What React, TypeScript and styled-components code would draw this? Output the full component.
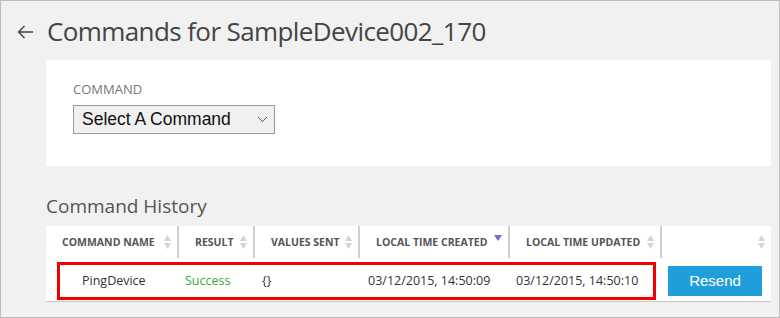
import React from "react";
import styled, { createGlobalStyle } from "styled-components";

const GlobalStyle = createGlobalStyle`
  html, body { margin: 0; padding: 0; }
  body {
    width: 780px;
    height: 318px;
    overflow: hidden;
    font-family: "Open Sans", "Noto Sans", sans-serif;
    background: #f1f1f1;
  }
  * { box-sizing: border-box; }
`;

interface Column {
  key: string;
  label: string;
  width: number;
  sorted?: boolean;
}

const columns: Column[] = [
  { key: "name", label: "Command Name", width: 131 },
  { key: "result", label: "Result", width: 76 },
  { key: "values", label: "Values Sent", width: 105 },
  { key: "created", label: "Local Time Created", width: 150, sorted: true },
  { key: "updated", label: "Local Time Updated", width: 152 },
  { key: "action", label: "", width: 111 },
];

const history = [
  {
    id: "1",
    name: "PingDevice",
    result: "Success",
    values: "{}",
    created: "03/12/2015, 14:50:09",
    updated: "03/12/2015, 14:50:10",
  },
];

function SortIcon({ active }: { active?: boolean }) {
  if (active) {
    return (
      <svg width="8" height="6" viewBox="0 0 8 6">
        <path d="M0 0 L8 0 L4 6 Z" fill="#6b6fd8" />
      </svg>
    );
  }
  return (
    <svg width="7" height="14" viewBox="0 0 7 14">
      <path d="M3.5 0 L7 6 L0 6 Z" fill="#d4d4d4" />
      <path d="M0 8 L7 8 L3.5 14 Z" fill="#d4d4d4" />
    </svg>
  );
}

function App() {
  return (
    <>
      <GlobalStyle />
      <Frame>
        <Header>
          <BackButton>
            <svg width="17" height="14" viewBox="0 0 17 14">
              <path
                d="M16 7 H1.5 M7.5 1 L1.5 7 L7.5 13"
                fill="none"
                stroke="#444"
                strokeWidth="1.4"
              />
            </svg>
          </BackButton>
          <Title>Commands for SampleDevice002_170</Title>
        </Header>

        <Card>
          <FieldLabel>Command</FieldLabel>
          <SelectBox>
            <span>Select A Command</span>
            <svg width="11" height="7" viewBox="0 0 11 7">
              <path d="M1 1 L5.5 5.5 L10 1" fill="none" stroke="#555" strokeWidth="1" />
            </svg>
          </SelectBox>
        </Card>

        <SectionTitle>Command History</SectionTitle>

        <Table>
          <HeadRow>
            {columns.map((c) => (
              <HeadCell key={c.key} $width={c.width}>
                <span>{c.label}</span>
                <SortSlot>
                  <SortIcon active={c.sorted} />
                </SortSlot>
              </HeadCell>
            ))}
          </HeadRow>
          {history.map((h) => (
            <BodyRow key={h.id}>
              <BodyCell $width={131} $pad={36}>{h.name}</BodyCell>
              <BodyCell $width={76} $pad={8} $color="#3aa935">{h.result}</BodyCell>
              <BodyCell $width={105} $pad={9}>{h.values}</BodyCell>
              <BodyCell $width={150} $pad={10}>{h.created}</BodyCell>
              <BodyCell $width={152} $pad={8}>{h.updated}</BodyCell>
              <BodyCell $width={111} $pad={8}>
                <ResendButton>Resend</ResendButton>
              </BodyCell>
              <Highlight />
            </BodyRow>
          ))}
        </Table>
      </Frame>
    </>
  );
}

export default App;

const Frame = styled.div`
  width: 780px;
  height: 318px;
  border: 1px solid #bdbdbd;
  padding: 0 8px 0 45px;
  background: #f1f1f1;
`;

const Header = styled.div`
  display: flex;
  align-items: center;
  height: 59px;
  margin-left: -45px;
  padding-left: 16px;
`;

const BackButton = styled.div`
  width: 30px;
  display: flex;
  align-items: center;
  margin-top: 2px;
`;

const Title = styled.h1`
  margin: 0;
  font-weight: 400;
  font-size: 26px;
  color: #444;
  letter-spacing: -0.6px;
`;

const Card = styled.div`
  background: #fff;
  height: 106px;
  padding: 20px 27px;
`;

const FieldLabel = styled.div`
  font-size: 13px;
  color: #777;
  text-transform: uppercase;
  line-height: 18px;
  margin-bottom: 7px;
`;

const SelectBox = styled.div`
  width: 202px;
  height: 29px;
  border: 1px solid #9a9a9a;
  background: #f0f0f0;
  display: flex;
  align-items: center;
  justify-content: space-between;
  padding: 0 6px 0 8px;
  font-family: "Liberation Sans", Arial, sans-serif;
  font-size: 17.5px;
  color: #111;
`;

const SectionTitle = styled.h2`
  margin: 0;
  height: 60px;
  display: flex;
  align-items: flex-end;
  padding-bottom: 7px;
  font-weight: 400;
  font-size: 19px;
  color: #555;
`;

const Table = styled.div`
  background: #fff;
  border-bottom: 1px solid #c8c8c8;
`;

const HeadRow = styled.div`
  display: flex;
  height: 34px;
`;

const HeadCell = styled.div<{ $width: number }>`
  position: relative;
  width: ${(p) => p.$width}px;
  height: 32px;
  display: flex;
  align-items: center;
  padding-left: 16px;
  font-size: 10.5px;
  font-weight: 700;
  color: #555;
  text-transform: uppercase;
  white-space: nowrap;
  & + & {
    border-left: 2px solid #cfcfcf;
  }
`;

const SortSlot = styled.div`
  position: absolute;
  right: 6px;
  top: 9px;
  width: 8px;
  display: flex;
  justify-content: center;
`;

const BodyRow = styled.div`
  position: relative;
  display: flex;
  align-items: center;
  height: 41px;
`;

const BodyCell = styled.div<{ $width: number; $pad: number; $color?: string }>`
  width: ${(p) => p.$width}px;
  padding-left: ${(p) => p.$pad}px;
  font-size: 12.5px;
  color: ${(p) => p.$color || "#333"};
  white-space: nowrap;
`;

const ResendButton = styled.button`
  width: 94px;
  height: 30px;
  border: none;
  background: #1f9fd9;
  color: #fff;
  font-family: "Liberation Sans", Arial, sans-serif;
  font-size: 15px;
  cursor: pointer;
`;

const Highlight = styled.div`
  position: absolute;
  left: 11px;
  top: 2px;
  width: 599px;
  height: 38px;
  border: 3px solid #f00000;
  pointer-events: none;
`;
